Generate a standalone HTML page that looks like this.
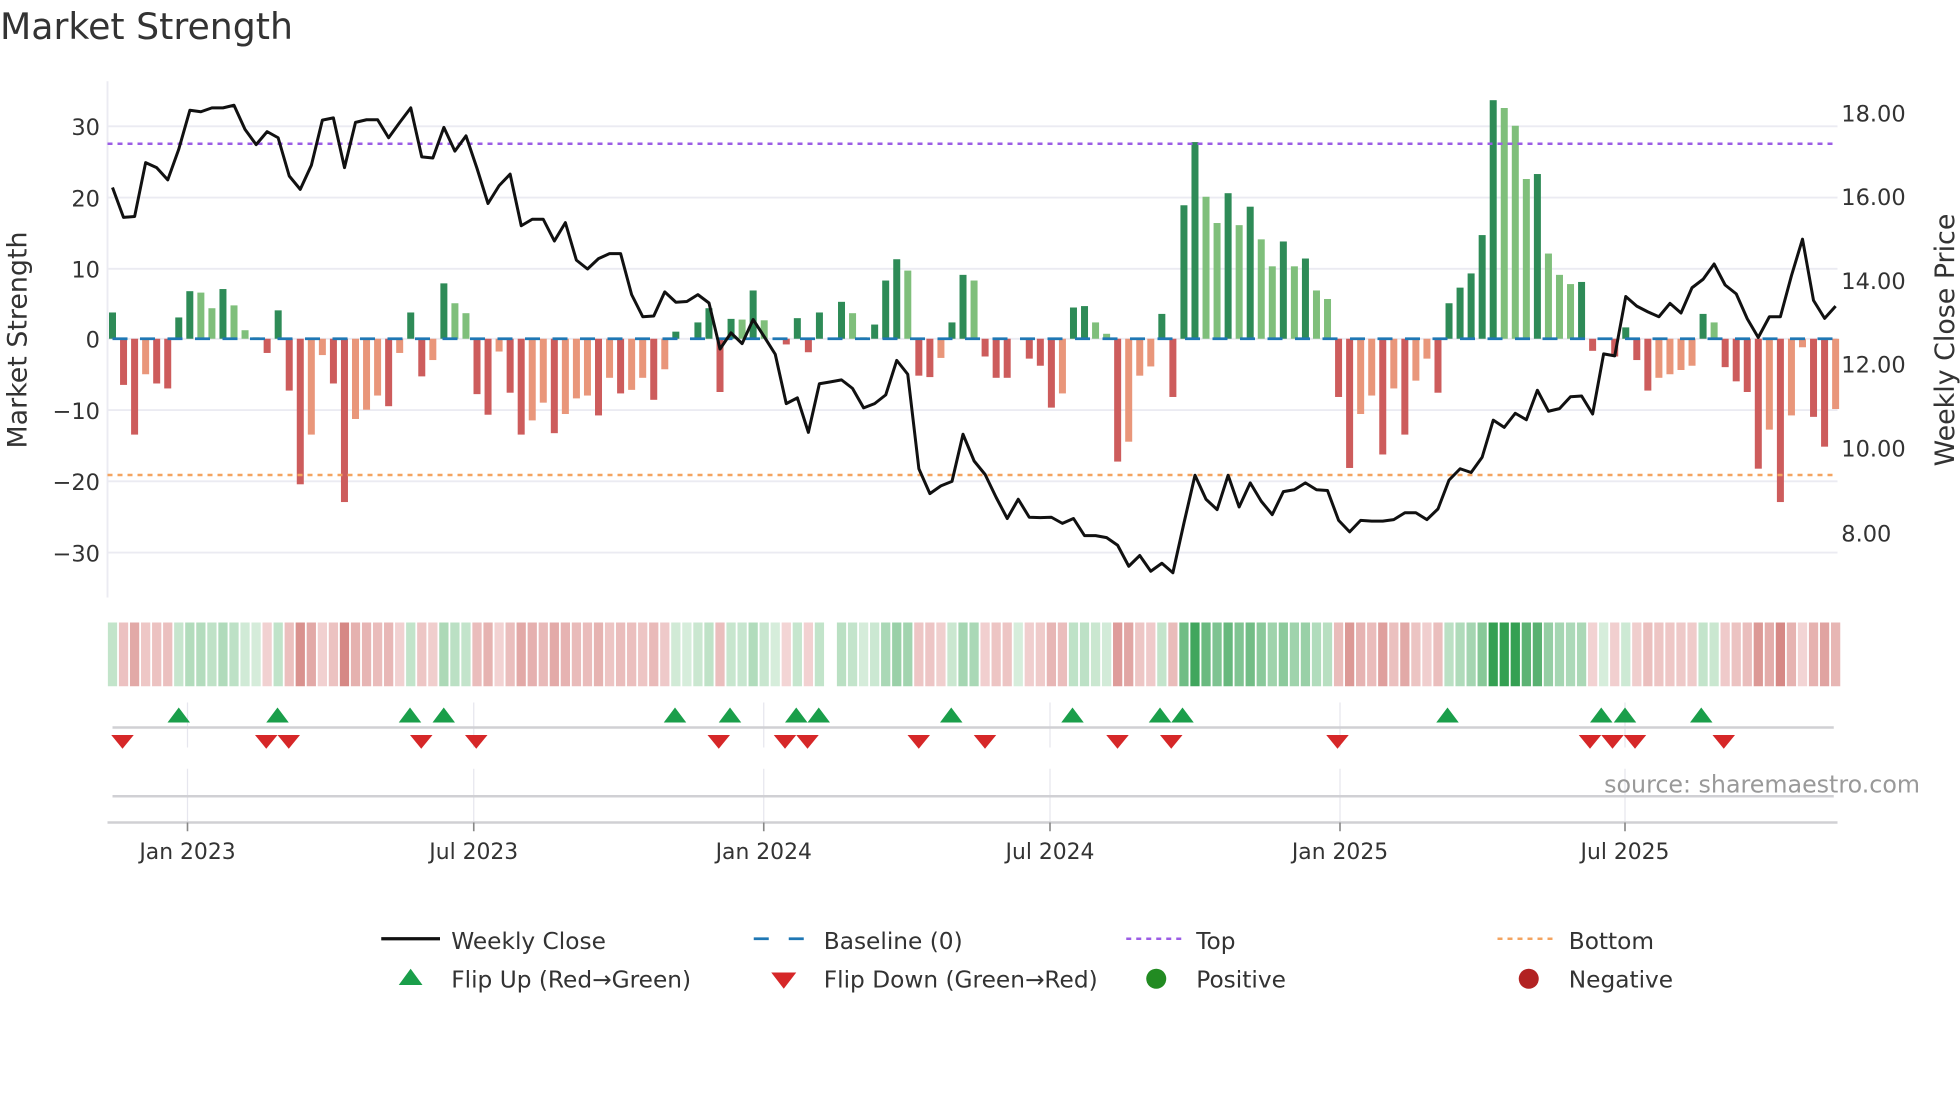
<!DOCTYPE html>
<html><head><meta charset="utf-8"><style>
html,body{margin:0;padding:0;background:#fff;width:1960px;height:1102px;overflow:hidden}
svg{display:block}
text{font-family:"DejaVu Sans","Liberation Sans",sans-serif;fill:#333}
</style></head><body>
<svg id="s" width="1960" height="1102" viewBox="0 0 1568 881.6" xmlns="http://www.w3.org/2000/svg">
<text x="0" y="31" font-size="29">Market Strength</text>
<g id="grid" stroke="#ebebf2" stroke-width="1.5">
<line x1="86" x2="1470" y1="101" y2="101"/><line x1="86" x2="1470" y1="158" y2="158"/><line x1="86" x2="1470" y1="215" y2="215"/><line x1="86" x2="1470" y1="271" y2="271"/><line x1="86" x2="1470" y1="328" y2="328"/><line x1="86" x2="1470" y1="385" y2="385"/><line x1="86" x2="1470" y1="442" y2="442"/>
</g>
<line x1="86" x2="86" y1="65" y2="478" stroke="#ebebf2" stroke-width="1.5"/>
<g font-size="18" text-anchor="end">
<text x="80" y="108">30</text><text x="80" y="165">20</text><text x="80" y="222">10</text><text x="80" y="278">0</text><text x="80" y="335">−10</text><text x="80" y="392">−20</text><text x="80" y="449">−30</text>
</g>
<g font-size="18">
<text x="1473" y="97">18.00</text><text x="1473" y="164">16.00</text><text x="1473" y="231">14.00</text><text x="1473" y="298">12.00</text><text x="1473" y="365">10.00</text><text x="1473" y="433">8.00</text>
</g>
<text transform="translate(21,272) rotate(-90)" font-size="21.5" text-anchor="middle">Market Strength</text>
<text transform="translate(1563,272) rotate(-90)" font-size="21.5" text-anchor="middle">Weekly Close Price</text>
<g id="bars"></g>
<line x1="90" x2="1470" y1="271" y2="271" stroke="#1f77b4" stroke-width="2.2" stroke-dasharray="12 10"/>
<line x1="86" x2="1470" y1="115" y2="115" stroke="#9b5de5" stroke-width="2" stroke-dasharray="4 4"/>
<line x1="86" x2="1470" y1="380" y2="380" stroke="#f4a460" stroke-width="2" stroke-dasharray="4 4"/>
<polyline id="price" fill="none" stroke="#111" stroke-width="2.4" stroke-linejoin="round"/>
<g id="strip"></g>
<g stroke="#e6e6ee" stroke-width="1">
<line x1="150" x2="150" y1="562" y2="598"/><line x1="379" x2="379" y1="562" y2="598"/><line x1="611" x2="611" y1="562" y2="598"/><line x1="840" x2="840" y1="562" y2="598"/><line x1="1072" x2="1072" y1="562" y2="598"/><line x1="1300" x2="1300" y1="562" y2="598"/>
<line x1="150" x2="150" y1="615" y2="657"/><line x1="379" x2="379" y1="615" y2="657"/><line x1="611" x2="611" y1="615" y2="657"/><line x1="840" x2="840" y1="615" y2="657"/><line x1="1072" x2="1072" y1="615" y2="657"/><line x1="1300" x2="1300" y1="615" y2="657"/>
</g>
<line x1="90" x2="1467" y1="582" y2="582" stroke="#d0d0d4" stroke-width="2"/>
<line x1="90" x2="1467" y1="637" y2="637" stroke="#d0d0d4" stroke-width="2"/>
<line x1="86" x2="1470" y1="658" y2="658" stroke="#d0d0d4" stroke-width="2"/>
<g id="tri"></g>
<g stroke="#888" stroke-width="1.3">
<line x1="150" x2="150" y1="658" y2="665"/><line x1="379" x2="379" y1="658" y2="665"/><line x1="611" x2="611" y1="658" y2="665"/><line x1="840" x2="840" y1="658" y2="665"/><line x1="1072" x2="1072" y1="658" y2="665"/><line x1="1300" x2="1300" y1="658" y2="665"/>
</g>
<g font-size="17.5" text-anchor="middle">
<text x="150" y="687">Jan 2023</text><text x="379" y="687">Jul 2023</text><text x="611" y="687">Jan 2024</text><text x="840" y="687">Jul 2024</text><text x="1072" y="687">Jan 2025</text><text x="1300" y="687">Jul 2025</text>
</g>
<text x="1536" y="634" font-size="19" text-anchor="end" style="fill:#999">source: sharemaestro.com</text>
<g font-size="18.6">
<line x1="305" x2="352" y1="751" y2="751" stroke="#111" stroke-width="2.6"/>
<text x="361" y="759">Weekly Close</text>
<line x1="603" x2="646" y1="751" y2="751" stroke="#1f77b4" stroke-width="2.2" stroke-dasharray="12 16"/>
<text x="659" y="759">Baseline (0)</text>
<line x1="901" x2="945" y1="751" y2="751" stroke="#9b5de5" stroke-width="2" stroke-dasharray="4 4"/>
<text x="957" y="759">Top</text>
<line x1="1198" x2="1243" y1="751" y2="751" stroke="#f4a460" stroke-width="2" stroke-dasharray="4 4"/>
<text x="1255" y="759">Bottom</text>
<polygon points="319,788 338,788 328.5,775" fill="#1a9e4a"/>
<text x="361" y="790">Flip Up (Red→Green)</text>
<polygon points="617,778 637,778 627,791" fill="#d62728"/>
<text x="659" y="790">Flip Down (Green→Red)</text>
<circle cx="925" cy="783" r="8" fill="#228b22"/>
<text x="957" y="790">Positive</text>
<circle cx="1223" cy="783" r="8" fill="#b22222"/>
<text x="1255" y="790">Negative</text>
</g>
</svg>
<script>
var v=[3.7,-6.5,-13.5,-5,-6.3,-7,3,6.7,6.5,4.3,7,4.7,1.2,0.2,-2,4,-7.3,-20.5,-13.5,-2.3,-6.3,-23,-11.3,-10,-8,-9.5,-2,3.7,-5.3,-3,7.8,5,3.6,-7.8,-10.7,-1.8,-7.6,-13.5,-11.5,-9,-13.3,-10.6,-8.4,-8,-10.8,-5.5,-7.7,-7.2,-5.5,-8.6,-4.3,1,0,2.3,4.3,-7.5,2.8,2.7,6.8,2.6,0,-0.8,2.9,-1.9,3.7,0,5.2,3.6,0.2,2,8.2,11.2,9.6,-5.2,-5.4,-2.7,2.3,9,8.2,
-2.5,-5.5,-5.5,0,-2.8,-3.8,-9.7,-7.7,4.4,4.6,2.3,0.7,-17.3,-14.5,-5.2,-3.9,3.5,-8.2,18.8,27.7,20,16.3,20.5,16,18.6,14,10.2,13.7,10.2,11.3,6.8,5.6,-8.2,-18.2,-10.6,-8,-16.3,-7,-13.5,-5.9,-2.8,-7.6,5,7.2,9.2,14.6,33.6,32.5,30,22.5,23.2,12,9,7.7,8,-1.7,0,-2.5,1.6,-3,-7.3,-5.5,-5,-4.4,-3.8,3.5,2.3,-4,-6,-7.5,-18.3,-12.8,-23,-10.8,-1.2,-11,-15.2,-9.9];
var p=[490,568,566,425,438,470,390,288,292,282,282,275,338,378,344,360,460,495,432,314,308,438,320,313,313,360,320,282,410,413,333,395,355,440,532,485,455,590,573,573,630,582,680,703,676,663,663,770,828,826,763,790,788,770,792,912,870,898,835,880,926,1055,1040,1130,1003,998,993,1015,1066,1055,1032,942,978,1225,1290,1270,1258,1135,1205,
1240,1300,1355,1305,1352,1353,1352,1368,1355,1400,1400,1405,1425,1480,1452,1493,1472,1497,1368,1242,1305,1332,1242,1325,1262,1310,1345,1285,1280,1262,1280,1282,1360,1390,1360,1362,1362,1358,1340,1340,1358,1330,1255,1225,1235,1195,1098,1117,1080,1097,1020,1075,1068,1037,1035,1082,925,930,775,800,815,828,793,818,752,730,690,745,768,833,882,828,828,720,625,785,832,800];
var NS="http://www.w3.org/2000/svg",n=v.length,sp=(1468.5-90)/(n-1);
function el(t,a,par){var e=document.createElementNS(NS,t);for(var k in a)e.setAttribute(k,a[k]);par.appendChild(e);return e;}
var B=document.getElementById('bars'),S=document.getElementById('strip');
function mix(a,b,t){return 'rgb('+[0,1,2].map(function(i){return Math.round(a[i]+(b[i]-a[i])*t)}).join(',')+')';}
for(var i=0;i<n;i++){
 var x=90+i*sp,val=v[i],pr=i>0?v[i-1]:0,c;
 if(val>0){c=(val>=pr||pr<=0)?'#2e8b57':'#7fbf7b';}else{c=(val<=pr||pr>=0)?'#cd5c5c':'#e9967a';}
 if(Math.abs(val)>0.05){var h=Math.abs(val)*5.68;el('rect',{x:x-2.8,y:val>0?271-h:271,width:5.6,height:h,fill:c},B);}
 if(i!==65){var t=Math.min(1,Math.abs(val)/30);
  var col=val>=0?mix([214,237,219],[52,160,82],t):mix([244,216,216],[205,112,108],t);
  el('rect',{x:x-3.7,y:498,width:7.4,height:51,fill:col},S);}
}
var pts=[];for(var i=0;i<p.length;i++)pts.push((90+i*sp).toFixed(1)+','+(p[i]/3.267).toFixed(1));
document.getElementById('price').setAttribute('points',pts.join(' '));
var T=document.getElementById('tri');
[143,222,328,355,540,584,637,655,761,858,928,946,1158,1281,1300,1361].forEach(function(x){el('polygon',{points:(x-9)+',578 '+(x+9)+',578 '+x+',566',fill:'#1a9e4a'},T);});
[98,213,231,337,381,575,628,646,735,788,894,937,1070,1272,1290,1308,1379].forEach(function(x){el('polygon',{points:(x-9)+',588 '+(x+9)+',588 '+x+',599',fill:'#d62728'},T);});
</script>
</body></html>
